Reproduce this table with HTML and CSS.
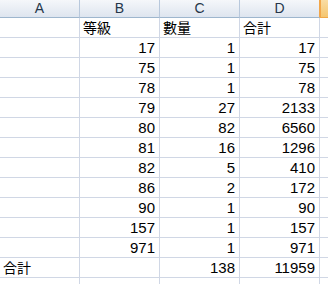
FILE: index.html
```html
<!DOCTYPE html>
<html lang="ja">
<head>
<meta charset="utf-8">
<link rel="stylesheet" href="styles.css">
</head>
<body>
<div class="sheet">
  <div class="hd">A</div><div class="hd">B</div><div class="hd">C</div><div class="hd">D</div><div class="hd sel"></div>

  <div class="c"></div><div class="c t">等級</div><div class="c t">數量</div><div class="c t">合計</div><div class="c e"></div>
  <div class="c"></div><div class="c n">17</div><div class="c n">1</div><div class="c n">17</div><div class="c e"></div>
  <div class="c"></div><div class="c n">75</div><div class="c n">1</div><div class="c n">75</div><div class="c e"></div>
  <div class="c"></div><div class="c n">78</div><div class="c n">1</div><div class="c n">78</div><div class="c e"></div>
  <div class="c"></div><div class="c n">79</div><div class="c n">27</div><div class="c n">2133</div><div class="c e"></div>
  <div class="c"></div><div class="c n">80</div><div class="c n">82</div><div class="c n">6560</div><div class="c e"></div>
  <div class="c"></div><div class="c n">81</div><div class="c n">16</div><div class="c n">1296</div><div class="c e"></div>
  <div class="c"></div><div class="c n">82</div><div class="c n">5</div><div class="c n">410</div><div class="c e"></div>
  <div class="c"></div><div class="c n">86</div><div class="c n">2</div><div class="c n">172</div><div class="c e"></div>
  <div class="c"></div><div class="c n">90</div><div class="c n">1</div><div class="c n">90</div><div class="c e"></div>
  <div class="c"></div><div class="c n">157</div><div class="c n">1</div><div class="c n">157</div><div class="c e"></div>
  <div class="c"></div><div class="c n">971</div><div class="c n">1</div><div class="c n">971</div><div class="c e"></div>
  <div class="c t">合計</div><div class="c"></div><div class="c n">138</div><div class="c n">11959</div><div class="c e"></div>
  <div class="c"></div><div class="c"></div><div class="c"></div><div class="c"></div><div class="c e"></div>
</div>
</body>
</html>
```
FILE: styles.css
```css
html, body {
  margin: 0;
  padding: 0;
  background: #ffffff;
}
body {
  width: 328px;
  height: 284px;
  overflow: hidden;
}
.sheet {
  display: grid;
  grid-template-columns: 80px 80px 80px 80px 8px;
  grid-template-rows: 18px repeat(14, 20px);
  font-family: "Liberation Sans", "Noto Sans CJK JP", sans-serif;
  font-size: 15px;
  color: #000000;
}
.hd {
  box-sizing: border-box;
  background: linear-gradient(#f5f7fa, #dee5ef);
  border-right: 1px solid #b8c8dc;
  border-bottom: 1px solid #9eb6ce;
  color: #25364a;
  font-size: 14px;
  line-height: 17px;
  text-align: center;
}
.hd.sel {
  background: linear-gradient(#f9dca3, #f5c670);
  border-right: none;
  border-bottom: 1px solid #f0a848;
  box-shadow: inset 1px 0 0 #f2a64a;
}
.hd:nth-child(4) {
  border-right-color: #f2a64a;
}
.c {
  box-sizing: border-box;
  border-right: 1px solid #d0d7e5;
  border-bottom: 1px solid #d0d7e5;
  line-height: 19px;
  white-space: nowrap;
  overflow: hidden;
}
.c.e {
  border-right: none;
}
.n {
  text-align: right;
  padding-right: 4px;
}
.t {
  font-family: "Noto Sans CJK JP", sans-serif;
  font-size: 14px;
  padding-left: 3px;
}
```
